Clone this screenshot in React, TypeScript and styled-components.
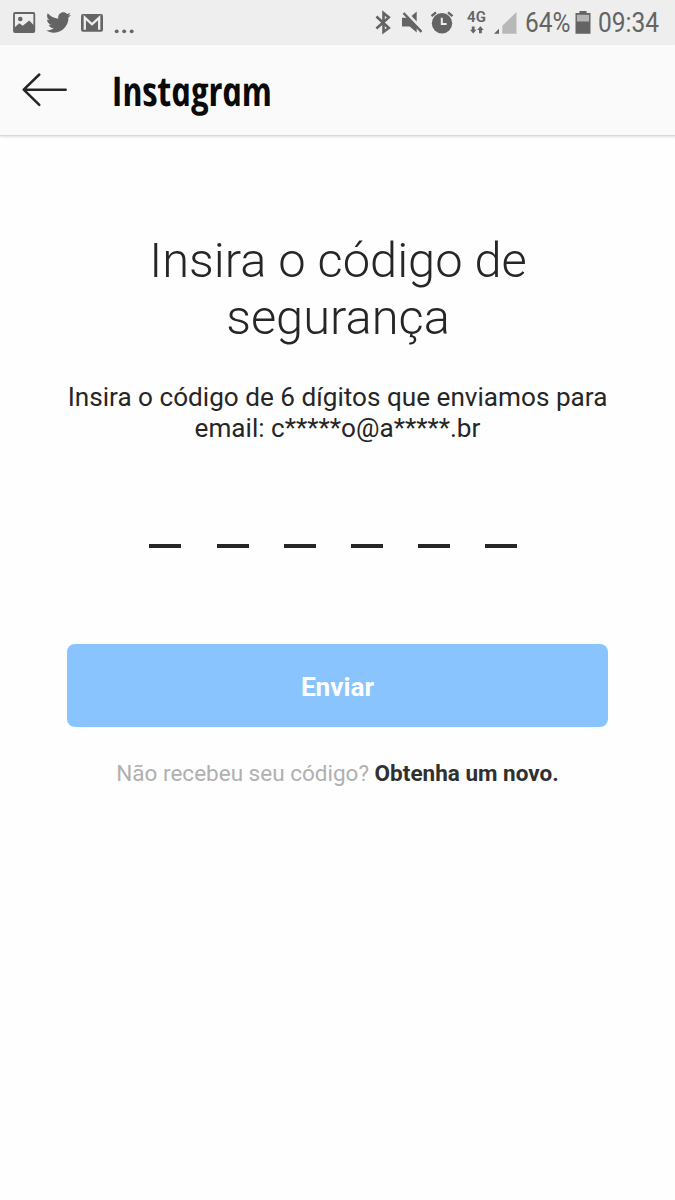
import React from "react";
import styled, { createGlobalStyle } from "styled-components";
import { FaTwitter } from "react-icons/fa";

const GlobalStyle = createGlobalStyle`
  * { box-sizing: border-box; }
  body {
    margin: 0;
    background: #fff;
    color: #262626;
    font-family: Roboto, "Liberation Sans", sans-serif;
  }
`;

const gray = "#646464";

const Screen = styled.div`
  width: 675px;
  min-height: 1200px;
  display: flex;
  flex-direction: column;
  background: #fefefe;
`;

const StatusBar = styled.header`
  height: 45px;
  padding: 0 15px 0 13px;
  display: flex;
  align-items: flex-start;
  justify-content: space-between;
  background: #eeeeee;
  color: ${gray};
`;

const StatusGroup = styled.div`
  height: 45px;
  display: flex;
  align-items: flex-start;
  svg { display: block; flex: none; }
`;

const Glyph = styled.svg<{ $left?: number }>`
  margin-left: ${(p) => p.$left ?? 0}px;
`;

const Bird = styled(FaTwitter)`
  width: 25px;
  height: 25px;
  margin: 10px 0 0 10px;
`;

const Network = styled.div`
  width: 19px;
  margin: 10px 0 0 13px;
  display: flex;
  flex-direction: column;
  align-items: center;
  font-size: 15px;
  line-height: 15px;
  font-weight: 600;
`;

const StatusText = styled.span<{ $width: number; $left: number }>`
  width: ${(p) => p.$width}px;
  margin-left: ${(p) => p.$left}px;
  font-size: 28.5px;
  line-height: 46px;
  white-space: nowrap;
  span {
    display: inline-block;
    transform: scaleX(0.86);
    transform-origin: left;
  }
`;

const TopBar = styled.nav`
  height: 91px;
  padding-left: 21px;
  display: flex;
  align-items: center;
  background: #fafafa;
  border-bottom: 1px solid #d8d8d8;
  box-shadow: 0 1px 2px rgba(0, 0, 0, 0.12);
`;

const BackButton = styled.button`
  width: 47px;
  height: 40px;
  padding: 0;
  border: 0;
  background: none;
  svg { display: block; }
`;

const Wordmark = styled.span`
  margin-left: 43px;
  width: 160px;
  white-space: nowrap;
  color: #0a0a0a;
  font: italic 700 41px/60px "Open Sans", "Noto Sans", sans-serif;
  letter-spacing: -0.5px;
  transform: scaleX(0.82) skewX(12deg);
  transform-origin: left;
`;

const Content = styled.main`
  padding: 96px 67px 0;
  display: flex;
  flex-direction: column;
  align-items: stretch;
  text-align: center;
`;

const Title = styled.h1`
  margin: 0;
  padding-left: 1px;
  font-size: 48.8px;
  line-height: 57px;
  font-weight: 300;
`;

const Description = styled.p`
  margin: 36px -10px 0;
  font-size: 26.15px;
  line-height: 31px;
`;

const CodeField = styled.div`
  margin: 100px 0 0 82.4px;
  display: flex;
  gap: 35.2px;
`;

const Digit = styled.span`
  width: 32px;
  height: 4px;
  background: #262626;
`;

const Submit = styled.button`
  height: 83px;
  margin: 96px 0 0;
  padding: 3px 0 0;
  border: 0;
  border-radius: 8px;
  background: #89c4ff;
  color: #fff;
  font: 700 26.2px Roboto, sans-serif;
`;

const Resend = styled.p`
  margin: 33px 0 0;
  font-size: 22.5px;
  line-height: 27px;
  color: #b0b0b0;
  strong { color: #303030; font-weight: 700; }
`;

const PictureIcon = () => (
  <Glyph width="23" height="45" viewBox="13 0 23 45" fill="none">
    <rect x="14" y="13" width="20.3" height="19" rx="1" stroke={gray} strokeWidth="1.8" />
    <circle cx="20.3" cy="19" r="2.3" fill={gray} />
    <path d="M14 28l5.2-4.8 3.6 2.6 6.4-5.3 5.3 5.5V32H14z" fill={gray} />
  </Glyph>
);

const MailIcon = () => (
  <Glyph $left={10} width="23" height="45" viewBox="81 0 23 45">
    <rect x="81" y="14" width="22" height="17.7" rx="2" fill={gray} />
    <path d="M84.8 29.7V17.6l7.2 6.7 7.2-6.7v12.1" fill="none" stroke="#eee" strokeWidth="2.3" />
  </Glyph>
);

const MoreIcon = () => (
  <Glyph $left={10} width="20" height="45" viewBox="114 0 20 45" fill={gray}>
    <circle cx="116.7" cy="31.3" r="1.9" />
    <circle cx="124.2" cy="31.3" r="1.9" />
    <circle cx="131.7" cy="31.3" r="1.9" />
  </Glyph>
);

const BluetoothIcon = () => (
  <Glyph width="17" height="45" viewBox="375 0 17 45">
    <path d="M376.4 16.5L388.8 28l-5.3 4V13l5.3 4.4L376.4 28.5" fill="none" stroke={gray} strokeWidth="2.6" />
  </Glyph>
);

const MuteIcon = () => (
  <Glyph $left={9} width="23" height="45" viewBox="401 0 23 45">
    <path d="M402 17.8h5l9.7 9.5v5.3l-7-6H402zM411.5 16l5.2-4.6v10z" fill={gray} />
    <path d="M403.5 13l18 18.8" stroke={gray} strokeWidth="2.5" />
  </Glyph>
);

const AlarmIcon = () => (
  <Glyph $left={6} width="24" height="45" viewBox="430 0 24 45" fill="none">
    <circle cx="442" cy="23.3" r="10.2" fill={gray} />
    <path d="M431.5 16.2l4.5-3.9M452.5 16.2l-4.5-3.9" stroke={gray} strokeWidth="2.4" />
    <path d="M441.8 17.8v6.3h4.8" stroke="#eee" strokeWidth="2" />
  </Glyph>
);

const DataArrows = () => (
  <svg width="14" height="10" viewBox="0 0 14 10" fill={gray}>
    <path d="M1.8 1.5h2.8v3.2h1.9L3.2 8.6 -.1 4.7h1.9zM9 8.3h2.8V5.1h1.9L10.4 1.2 7.1 5.1H9z" />
  </svg>
);

const SignalIcon = () => (
  <Glyph $left={7} width="24" height="45" viewBox="493 0 24 45">
    <path d="M494 33.7l5-5v5z" fill={gray} />
    <path d="M502.3 33.7V25.7L516.5 12v21.7z" fill="#b8b8b8" />
  </Glyph>
);

const BatteryIcon = () => (
  <Glyph $left={6} width="16" height="45" viewBox="575.5 0 16 45">
    <path d="M576 13h4v-2h7v2h4v20.8h-15z" fill={gray} />
    <path d="M577.4 14.8h12.2v6.7h-12.2z" fill="#b5b5b5" />
  </Glyph>
);

export default function App() {
  return (
    <Screen>
      <GlobalStyle />
      <StatusBar>
        <StatusGroup>
          <PictureIcon />
          <Bird />
          <MailIcon />
          <MoreIcon />
        </StatusGroup>
        <StatusGroup>
          <BluetoothIcon />
          <MuteIcon />
          <AlarmIcon />
          <Network>
            4G
            <DataArrows />
          </Network>
          <SignalIcon />
          <StatusText $width={44} $left={8}><span>64%</span></StatusText>
          <BatteryIcon />
          <StatusText $width={62} $left={7}><span>09:34</span></StatusText>
        </StatusGroup>
      </StatusBar>
      <TopBar>
        <BackButton aria-label="Voltar">
          <svg width="47" height="40" viewBox="21 70 47 40" fill="none" stroke="#262626" strokeWidth="2.5" strokeLinecap="round" strokeLinejoin="round">
            <path d="M39.3 74.5L23.7 89.7l15.6 15.2M23.7 89.7h42" />
          </svg>
        </BackButton>
        <Wordmark>Instagram</Wordmark>
      </TopBar>
      <Content>
        <Title>Insira o código de<br />segurança</Title>
        <Description>Insira o código de 6 dígitos que enviamos para<br />email: c*****o@a*****.br</Description>
        <CodeField>
          {Array.from({ length: 6 }, (_, i) => <Digit key={i} />)}
        </CodeField>
        <Submit>Enviar</Submit>
        <Resend>Não recebeu seu código? <strong>Obtenha um novo.</strong></Resend>
      </Content>
    </Screen>
  );
}
